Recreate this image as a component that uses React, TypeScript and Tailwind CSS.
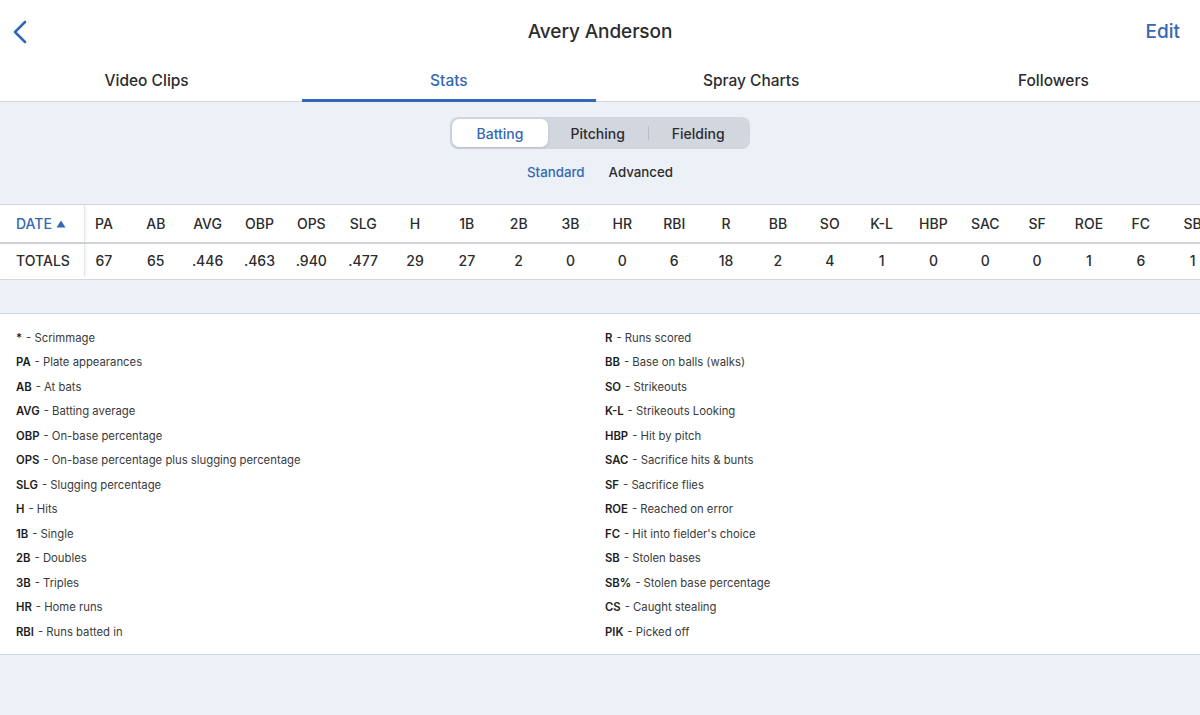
import React from 'react';

const BLUE = 'text-[#3568b2]';

const columns: [string, string][] = [
  ['PA', '67'],
  ['AB', '65'],
  ['AVG', '.446'],
  ['OBP', '.463'],
  ['OPS', '.940'],
  ['SLG', '.477'],
  ['H', '29'],
  ['1B', '27'],
  ['2B', '2'],
  ['3B', '0'],
  ['HR', '0'],
  ['RBI', '6'],
  ['R', '18'],
  ['BB', '2'],
  ['SO', '4'],
  ['K-L', '1'],
  ['HBP', '0'],
  ['SAC', '0'],
  ['SF', '0'],
  ['ROE', '1'],
  ['FC', '6'],
  ['SB', '1'],
];

const leftLegend: [string, string][] = [
  ['*', 'Scrimmage'],
  ['PA', 'Plate appearances'],
  ['AB', 'At bats'],
  ['AVG', 'Batting average'],
  ['OBP', 'On-base percentage'],
  ['OPS', 'On-base percentage plus slugging percentage'],
  ['SLG', 'Slugging percentage'],
  ['H', 'Hits'],
  ['1B', 'Single'],
  ['2B', 'Doubles'],
  ['3B', 'Triples'],
  ['HR', 'Home runs'],
  ['RBI', 'Runs batted in'],
];

const rightLegend: [string, string][] = [
  ['R', 'Runs scored'],
  ['BB', 'Base on balls (walks)'],
  ['SO', 'Strikeouts'],
  ['K-L', 'Strikeouts Looking'],
  ['HBP', 'Hit by pitch'],
  ['SAC', 'Sacrifice hits & bunts'],
  ['SF', 'Sacrifice flies'],
  ['ROE', 'Reached on error'],
  ['FC', "Hit into fielder's choice"],
  ['SB', 'Stolen bases'],
  ['SB%', 'Stolen base percentage'],
  ['CS', 'Caught stealing'],
  ['PIK', 'Picked off'],
];

const tabs = ['Video Clips', 'Stats', 'Spray Charts', 'Followers'];

const LegendList: React.FC<{ items: [string, string][] }> = ({ items }) => (
  <ul className="flex flex-col">
    {items.map(([abbr, desc]) => (
      <li key={abbr} className="h-[24.5px] flex items-center text-[11.3px] text-[#3a3a3c]">
        <span className="font-semibold text-[#1c1c1e]">{abbr}</span>
        <span className="ml-1">- {desc}</span>
      </li>
    ))}
  </ul>
);

export default function App() {
  return (
    <div className="w-[1200px] h-[715px] overflow-hidden bg-[#ecf0f7] font-['Inter','Helvetica',sans-serif] text-[#2c2c2e] flex flex-col">
      {/* nav bar */}
      <div className="bg-white">
        <div className="h-[60px] pt-[4px] flex items-center justify-between px-3 relative">
          <button className={`${BLUE} w-8 h-8 flex items-center`} aria-label="Back">
            <svg width="16" height="24" viewBox="0 0 16 24" fill="none">
              <path d="M13 2 L3 12 L13 22" stroke="#3568b2" strokeWidth="2.6" strokeLinecap="round" strokeLinejoin="round" />
            </svg>
          </button>
          <h1 className="absolute left-0 right-0 text-center text-[19px] font-medium text-[#2c2c2e] tracking-[-0.1px] pointer-events-none">
            Avery Anderson
          </h1>
          <button className={`${BLUE} text-[19px] font-medium pr-[8px]`}>Edit</button>
        </div>
        <div className="h-[42px] flex gap-[9px] border-b border-[#d4d8de]">
          {tabs.map((t) => (
            <div
              key={t}
              className={`flex-1 flex items-center justify-center text-[15.5px] font-medium relative ${
                t === 'Stats' ? BLUE : 'text-[#2c2c2e]'
              }`}
            >
              {t}
              {t === 'Stats' && <div className="absolute left-0 right-0 bottom-[-1px] h-[3px] bg-[#3568b2]" />}
            </div>
          ))}
        </div>
      </div>

      {/* filters */}
      <div className="h-[102px] flex flex-col items-center pt-[15px]">
        <div className="w-[300px] h-[32px] rounded-[8px] bg-[#d2d7df] p-[2px] flex items-center text-[14px] font-medium">
          <div className={`w-[96px] h-full rounded-[7px] bg-white shadow-sm flex items-center justify-center ${BLUE}`}>Batting</div>
          <div className="flex-1 h-full flex items-center justify-center text-[#2c2c2e]">Pitching</div>
          <div className="w-px h-[14px] bg-[#b9bec7]" />
          <div className="flex-1 h-full flex items-center justify-center text-[#2c2c2e]">Fielding</div>
        </div>
        <div className="mt-[14px] flex gap-[24px] text-[13.3px] font-medium">
          <span className={BLUE}>Standard</span>
          <span className="text-[#2c2c2e]">Advanced</span>
        </div>
      </div>

      {/* table */}
      <div className="bg-white border-y border-[#d4d8de] overflow-hidden">
        <div className="flex h-[39px] border-b-2 border-[#d0d4da] text-[14px] font-medium text-[#2c2c2e]">
          <div className={`w-[85px] shrink-0 pl-4 flex items-center gap-1 border-r border-[#e2e5ea] shadow-[2px_0_3px_rgba(0,0,0,0.04)] ${BLUE}`}>
            DATE
            <svg width="10" height="8" viewBox="0 0 10 8">
              <path d="M5 0.5 L9.5 7.5 L0.5 7.5 Z" fill="#3568b2" />
            </svg>
          </div>
          {columns.map(([h]) => (
            <div key={h} className="w-[51.85px] shrink-0 pr-[14px] flex items-center justify-center whitespace-nowrap">
              {h}
            </div>
          ))}
        </div>
        <div className="flex h-[35px] pb-[3px] text-[14px] font-medium text-[#2c2c2e]">
          <div className="w-[85px] shrink-0 pl-4 flex items-center border-r border-[#e2e5ea] shadow-[2px_0_3px_rgba(0,0,0,0.04)]">
            TOTALS
          </div>
          {columns.map(([h, v]) => (
            <div key={h} className="w-[51.85px] shrink-0 pr-[14px] flex items-center justify-center whitespace-nowrap">
              {v}
            </div>
          ))}
        </div>
      </div>

      <div className="h-[33px]" />

      {/* legend */}
      <div className="bg-white border-y border-[#d4d8de] pt-[12px] pb-[9px] flex">
        <div className="w-[605px] shrink-0 pl-4">
          <LegendList items={leftLegend} />
        </div>
        <div className="flex-1">
          <LegendList items={rightLegend} />
        </div>
      </div>
    </div>
  );
}
